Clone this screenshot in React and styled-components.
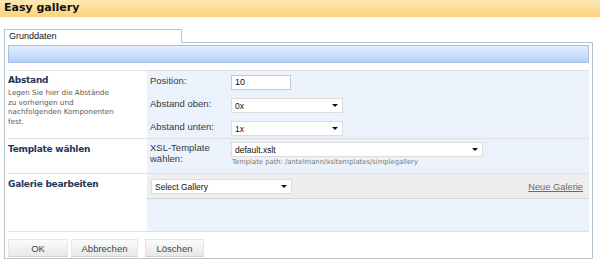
import React from 'react';
import styled, { createGlobalStyle } from 'styled-components';

const Global = createGlobalStyle`
  html, body { margin: 0; padding: 0; background: #fff; }
  body {
    width: 600px; height: 266px; overflow: hidden;
    font-family: "Liberation Sans", Arial, sans-serif;
    color: #333;
  }
`;

const Page = styled.div`
  width: 600px;
  height: 266px;
  display: flex;
  flex-direction: column;
`;

const Header = styled.div`
  height: 17px;
  box-sizing: border-box;
  padding-left: 4px;
  background: linear-gradient(#fde9b6, #fbd47a);
  font-family: "DejaVu Sans", Verdana, sans-serif;
  font-weight: bold;
  font-size: 11px;
  line-height: 15px;
  color: #111;
`;

const TabRow = styled.div`
  margin: 12px 0 0 4px;
  width: 589px;
  display: flex;
  height: 14px;
`;

const Tab = styled.div`
  width: 178px;
  box-sizing: border-box;
  border: 1px solid #b7c4d2;
  border-bottom: none;
  background: #fff;
  padding-left: 4px;
  font-size: 9px;
  line-height: 12px;
  color: #111;
`;

const TabFiller = styled.div`
  flex: 1;
  border-bottom: 1px solid #b7c4d2;
`;

const Panel = styled.div`
  margin-left: 4px;
  width: 589px;
  box-sizing: border-box;
  border: 1px solid #b7c4d2;
  border-top: none;
  padding: 2px 3px 1px;
  display: flex;
  flex-direction: column;
`;

const Bar = styled.div`
  height: 18px;
  box-sizing: border-box;
  border: 1px solid #a7c0e2;
  background: linear-gradient(#e6effc, #b4d1f9);
`;

const Form = styled.div`
  margin-top: 7px;
  border-bottom: 1px solid #e0e0e0;
`;

const Row = styled.div`
  display: grid;
  grid-template-columns: 139px 1fr;
  border-top: 1px solid #e0e0e0;
`;

const Side = styled.div`
  background: #fff;
  padding-top: ${p => p.$top}px;
`;

const Title = styled.div`
  font-family: "DejaVu Sans", Verdana, sans-serif;
  font-weight: bold;
  font-size: 9px;
  letter-spacing: -0.25px;
  line-height: 11px;
  color: #1d3658;
`;

const Desc = styled.div`
  font-family: "DejaVu Sans", Verdana, sans-serif;
  font-size: 7.2px;
  line-height: 9.5px;
  color: #5a5a5a;
  margin-top: 2px;
`;

const Main = styled.div`
  background: #ebf2fc;
  padding: ${p => p.$pad};
  display: flex;
  flex-direction: column;
  gap: ${p => p.$gap || 0}px;
`;

const Field = styled.div`
  display: grid;
  grid-template-columns: 84px 1fr;
  align-items: start;
`;

const Label = styled.div`
  padding-left: 3px;
  font-size: 9.5px;
  line-height: 11px;
  color: #3a3a3a;
`;

const Control = styled.div`
  display: flex;
  flex-direction: column;
`;

const TextInput = styled.div`
  width: 60px;
  height: 15px;
  box-sizing: border-box;
  border: 1px solid #c9c9c9;
  background: #fff;
  padding-left: 3px;
  font-size: 9px;
  line-height: 13px;
  color: #111;
`;

const Select = styled.div`
  width: ${p => p.$w}px;
  height: 15px;
  box-sizing: border-box;
  border: 1px solid #dcdcdc;
  background: #fff;
  padding: 0 4px 0 3px;
  display: flex;
  align-items: center;
  justify-content: space-between;
  font-size: 8.5px;
  color: #111;
  &::after {
    content: "";
    border-left: 3px solid transparent;
    border-right: 3px solid transparent;
    border-top: 3px solid #111;
  }
`;

const Hint = styled.div`
  font-family: "DejaVu Sans", Verdana, sans-serif;
  font-size: 6.8px;
  line-height: 11px;
  color: #777;
  padding-left: 1px;
`;

const Band = styled.div`
  height: 25px;
  box-sizing: border-box;
  background: #eeeeee;
  border-bottom: 1px solid #d8d8d8;
  padding: 5px 6px 0 4px;
  display: flex;
  justify-content: space-between;
  align-items: flex-start;
`;

const Link = styled.a`
  font-size: 9.3px;
  line-height: 14px;
  color: #6a6a6a;
  text-decoration: underline;
  margin-top: 1px;
`;

const Buttons = styled.div`
  margin-top: 7px;
  display: flex;
`;

const Button = styled.button`
  width: ${p => p.$w}px;
  margin-right: ${p => p.$mr || 0}px;
  height: 18px;
  box-sizing: border-box;
  border: 1px solid #e6e6e6;
  border-bottom-color: #d2d2d2;
  background: linear-gradient(#fbfbfb, #e8e8e8);
  font-family: "Liberation Sans", Arial, sans-serif;
  font-size: 9.5px;
  color: #444;
  padding: 0;
`;

export default function App() {
  return (
    <>
      <Global />
      <Page>
        <Header>Easy gallery</Header>
        <TabRow>
          <Tab>Grunddaten</Tab>
          <TabFiller />
        </TabRow>
        <Panel>
          <Bar />
          <Form>
            <Row>
              <Side $top={4}>
                <Title>Abstand</Title>
                <Desc>
                  Legen Sie hier die Abstände<br />
                  zu vorherigen und<br />
                  nachfolgenden Komponenten<br />
                  fest.
                </Desc>
              </Side>
              <Main $pad="4px 0 2px" $gap={8}>
                <Field>
                  <Label>Position:</Label>
                  <TextInput>10</TextInput>
                </Field>
                <Field>
                  <Label>Abstand oben:</Label>
                  <Select $w={112}>0x</Select>
                </Field>
                <Field>
                  <Label>Abstand unten:</Label>
                  <Select $w={112}>1x</Select>
                </Field>
              </Main>
            </Row>
            <Row>
              <Side $top={5}>
                <Title>Template wählen</Title>
              </Side>
              <Main $pad="3px 0 5px">
                <Field>
                  <Label>XSL-Template<br />wählen:</Label>
                  <Control>
                    <Select $w={252}>default.xslt</Select>
                    <Hint>Template path: /antelmann/xsltemplates/simplegallery</Hint>
                  </Control>
                </Field>
              </Main>
            </Row>
            <Row>
              <Side $top={5}>
                <Title>Galerie bearbeiten</Title>
              </Side>
              <Main $pad="0 0 32px">
                <Band>
                  <Select $w={141}>Select Gallery</Select>
                  <Link>Neue Galerie</Link>
                </Band>
              </Main>
            </Row>
          </Form>
          <Buttons>
            <Button $w={60} $mr={3}>OK</Button>
            <Button $w={67} $mr={7}>Abbrechen</Button>
            <Button $w={59}>Löschen</Button>
          </Buttons>
        </Panel>
      </Page>
    </>
  );
}
